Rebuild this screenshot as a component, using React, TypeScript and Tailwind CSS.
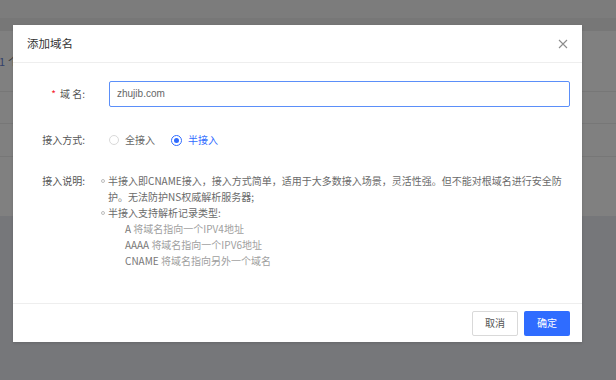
import React from "react";

const font = { fontFamily: '"Noto Sans CJK SC", "Liberation Sans", sans-serif' };

function Bullet() {
  return (
    <span className="w-[7px] h-[16px] shrink-0 flex items-center">
      <span className="w-[4px] h-[4px] rounded-full border border-[#bdbdbd]" />
    </span>
  );
}

export default function App() {
  return (
    <div className="relative w-[616px] h-[380px] overflow-hidden bg-[#808080]" style={font}>
      {/* underlying page seen through the mask */}
      <div className="flex flex-col h-full">
        <div className="h-[18px] bg-[#7c7c7c]" />
        <div className="h-[13px] bg-[#777777]" />
        <div className="h-[61px] border-b border-[#777777] flex items-center">
          <span className="ml-[-1px] text-[11px] leading-none">
            <span className="text-[#33406a]">1</span>
            <span className="text-[#3c3c3c] ml-[3px]">个</span>
          </span>
        </div>
        <div className="h-[32px] border-b border-[#777777]" />
        <div className="h-[33px] border-b border-[#777777]" />
        <div className="h-[59px]" />
        <div className="flex-1 bg-[#76777a]" />
      </div>

      {/* dialog */}
      <div className="absolute left-[13px] top-[25px] w-[569px] h-[317px] bg-white flex flex-col shadow-[0_1px_3px_rgba(0,0,0,0.15)]">
        <div className="h-[38px] shrink-0 flex items-center justify-between pl-[14px] pr-[14px] border-b border-[#eeeeee]">
          <span className="text-[11.5px] text-[#333333] leading-none">添加域名</span>
          <svg width="10" height="10" viewBox="0 0 10 10">
            <path d="M1 1 L9 9 M9 1 L1 9" stroke="#8c8c8c" strokeWidth="1.1" fill="none" />
          </svg>
        </div>

        <div className="flex-1 flex flex-col pt-[18px]">
          {/* domain row */}
          <div className="flex items-center h-[26px]">
            <div className="w-[72px] text-right text-[10px] text-[#555555] leading-none">
              <span className="text-[#f5222d] mr-[4px]">*</span>域 名:
            </div>
            <div className="ml-[24px] w-[461px] h-[26px] border border-[#5b8ff9] rounded-[2px] flex items-center pl-[7px]">
              <span className="text-[10px] text-[#666666] leading-none" style={{ fontFamily: '"Liberation Sans", sans-serif' }}>
                zhujib.com
              </span>
            </div>
          </div>

          {/* access mode */}
          <div className="flex items-center h-[16px] mt-[25px]">
            <div className="w-[72px] text-right text-[10px] text-[#555555] leading-none">接入方式:</div>
            <div className="ml-[24px] flex items-center">
              <span className="w-[10px] h-[10px] rounded-full border border-[#d9d9d9] bg-white" />
              <span className="ml-[6px] text-[10px] text-[#666666] leading-none">全接入</span>
              <span className="ml-[16px] w-[11px] h-[11px] rounded-full border border-[#2f6bff] flex items-center justify-center">
                <span className="w-[5px] h-[5px] rounded-full bg-[#2f6bff]" />
              </span>
              <span className="ml-[6px] text-[10px] text-[#2f6bff] leading-none">半接入</span>
            </div>
          </div>

          {/* description */}
          <div className="flex mt-[25px]">
            <div className="w-[72px] text-right text-[10px] text-[#555555] leading-[16px]">接入说明:</div>
            <div className="ml-[16px] flex flex-col text-[10px] leading-[16px] text-[#6a6a6a]">
              <div className="flex">
                <Bullet />
                <div className="flex flex-col">
                  <span className="whitespace-nowrap">半接入即CNAME接入，接入方式简单，适用于大多数接入场景，灵活性强。但不能对根域名进行安全防</span>
                  <span className="whitespace-nowrap">护。无法防护NS权威解析服务器;</span>
                </div>
              </div>
              <div className="flex">
                <Bullet />
                <span>半接入支持解析记录类型:</span>
              </div>
              <div className="pl-[24px] flex flex-col">
                <span><span className="text-[#777777]">A</span> <span className="text-[#a0a0a0]">将域名指向一个IPV4地址</span></span>
                <span><span className="text-[#777777]">AAAA</span> <span className="text-[#a0a0a0]">将域名指向一个IPV6地址</span></span>
                <span><span className="text-[#777777]">CNAME</span> <span className="text-[#a0a0a0]">将域名指向另外一个域名</span></span>
              </div>
            </div>
          </div>
        </div>

        <div className="h-[39px] shrink-0 border-t border-[#eeeeee] flex items-center justify-end gap-[6px] pr-[12px]">
          <button className="w-[46px] h-[25px] border border-[#d9d9d9] bg-white rounded-[2px] text-[10px] text-[#555555] leading-none">取消</button>
          <button className="w-[46px] h-[25px] bg-[#2f6cff] rounded-[2px] text-[10px] text-white leading-none">确定</button>
        </div>
      </div>
    </div>
  );
}
